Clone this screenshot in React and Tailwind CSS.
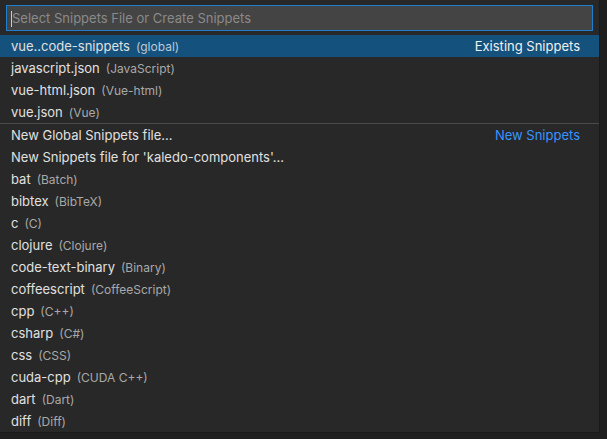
export default function App() {
  const groups1 = [
    ["vue..code-snippets", "(global)"],
    ["javascript.json", "(JavaScript)"],
    ["vue-html.json", "(Vue-html)"],
    ["vue.json", "(Vue)"],
  ];
  const groups2 = [
    ["New Global Snippets file...", ""],
    ["New Snippets file for 'kaledo-components'...", ""],
    ["bat", "(Batch)"],
    ["bibtex", "(BibTeX)"],
    ["c", "(C)"],
    ["clojure", "(Clojure)"],
    ["code-text-binary", "(Binary)"],
    ["coffeescript", "(CoffeeScript)"],
    ["cpp", "(C++)"],
    ["csharp", "(C#)"],
    ["css", "(CSS)"],
    ["cuda-cpp", "(CUDA C++)"],
    ["dart", "(Dart)"],
    ["diff", "(Diff)"],
  ];
  const font = { fontFamily: "Inter, 'Noto Sans', sans-serif" };
  const Row = ({ label, desc, selected, right, rightClass }) => (
    <div
      className={
        "flex h-[22px] items-center pl-[11px] pr-[19px] pt-px " +
        (selected ? "bg-[#15517d]" : "")
      }
    >
      <span className="text-[13px] text-[#e0e0e0]">{label}</span>
      {desc && (
        <span className={"ml-[6px] text-[12px] " + (selected ? "text-[#bcc9d6]" : "text-[#a8a8a8]")}>{desc}</span>
      )}
      <span className="flex-1" />
      {right && <span className={"text-[13px] " + rightClass}>{right}</span>}
    </div>
  );
  return (
    <div className="w-[607px] h-[439px] bg-[#1f1f1f] overflow-hidden" style={font}>
      <div className="w-[600px] h-[433px] bg-[#282828] border-r border-b border-[#1a1a1a] pt-[5px] flex flex-col">
        <div className="mx-[6px] h-[26px] border border-[#1f7fcc] bg-[#444444] flex items-center pl-[4px] pt-px">
          <span className="w-px h-[16px] bg-[#cccccc]" />
          <span className="text-[13px] text-[#8a8a8a]">Select Snippets File or Create Snippets</span>
        </div>
        <div className="mt-[4px] flex flex-col">
          {groups1.map(([l, d], i) => (
            <Row
              key={l}
              label={l}
              desc={d}
              selected={i === 0}
              right={i === 0 ? "Existing Snippets" : null}
              rightClass="text-[#f0f0f0]"
            />
          ))}
          <div className="h-px bg-[#4a4a4a]" />
          {groups2.map(([l, d], i) => (
            <Row
              key={l}
              label={l}
              desc={d}
              right={i === 0 ? "New Snippets" : null}
              rightClass="text-[#3794ff]"
            />
          ))}
        </div>
      </div>
    </div>
  );
}
